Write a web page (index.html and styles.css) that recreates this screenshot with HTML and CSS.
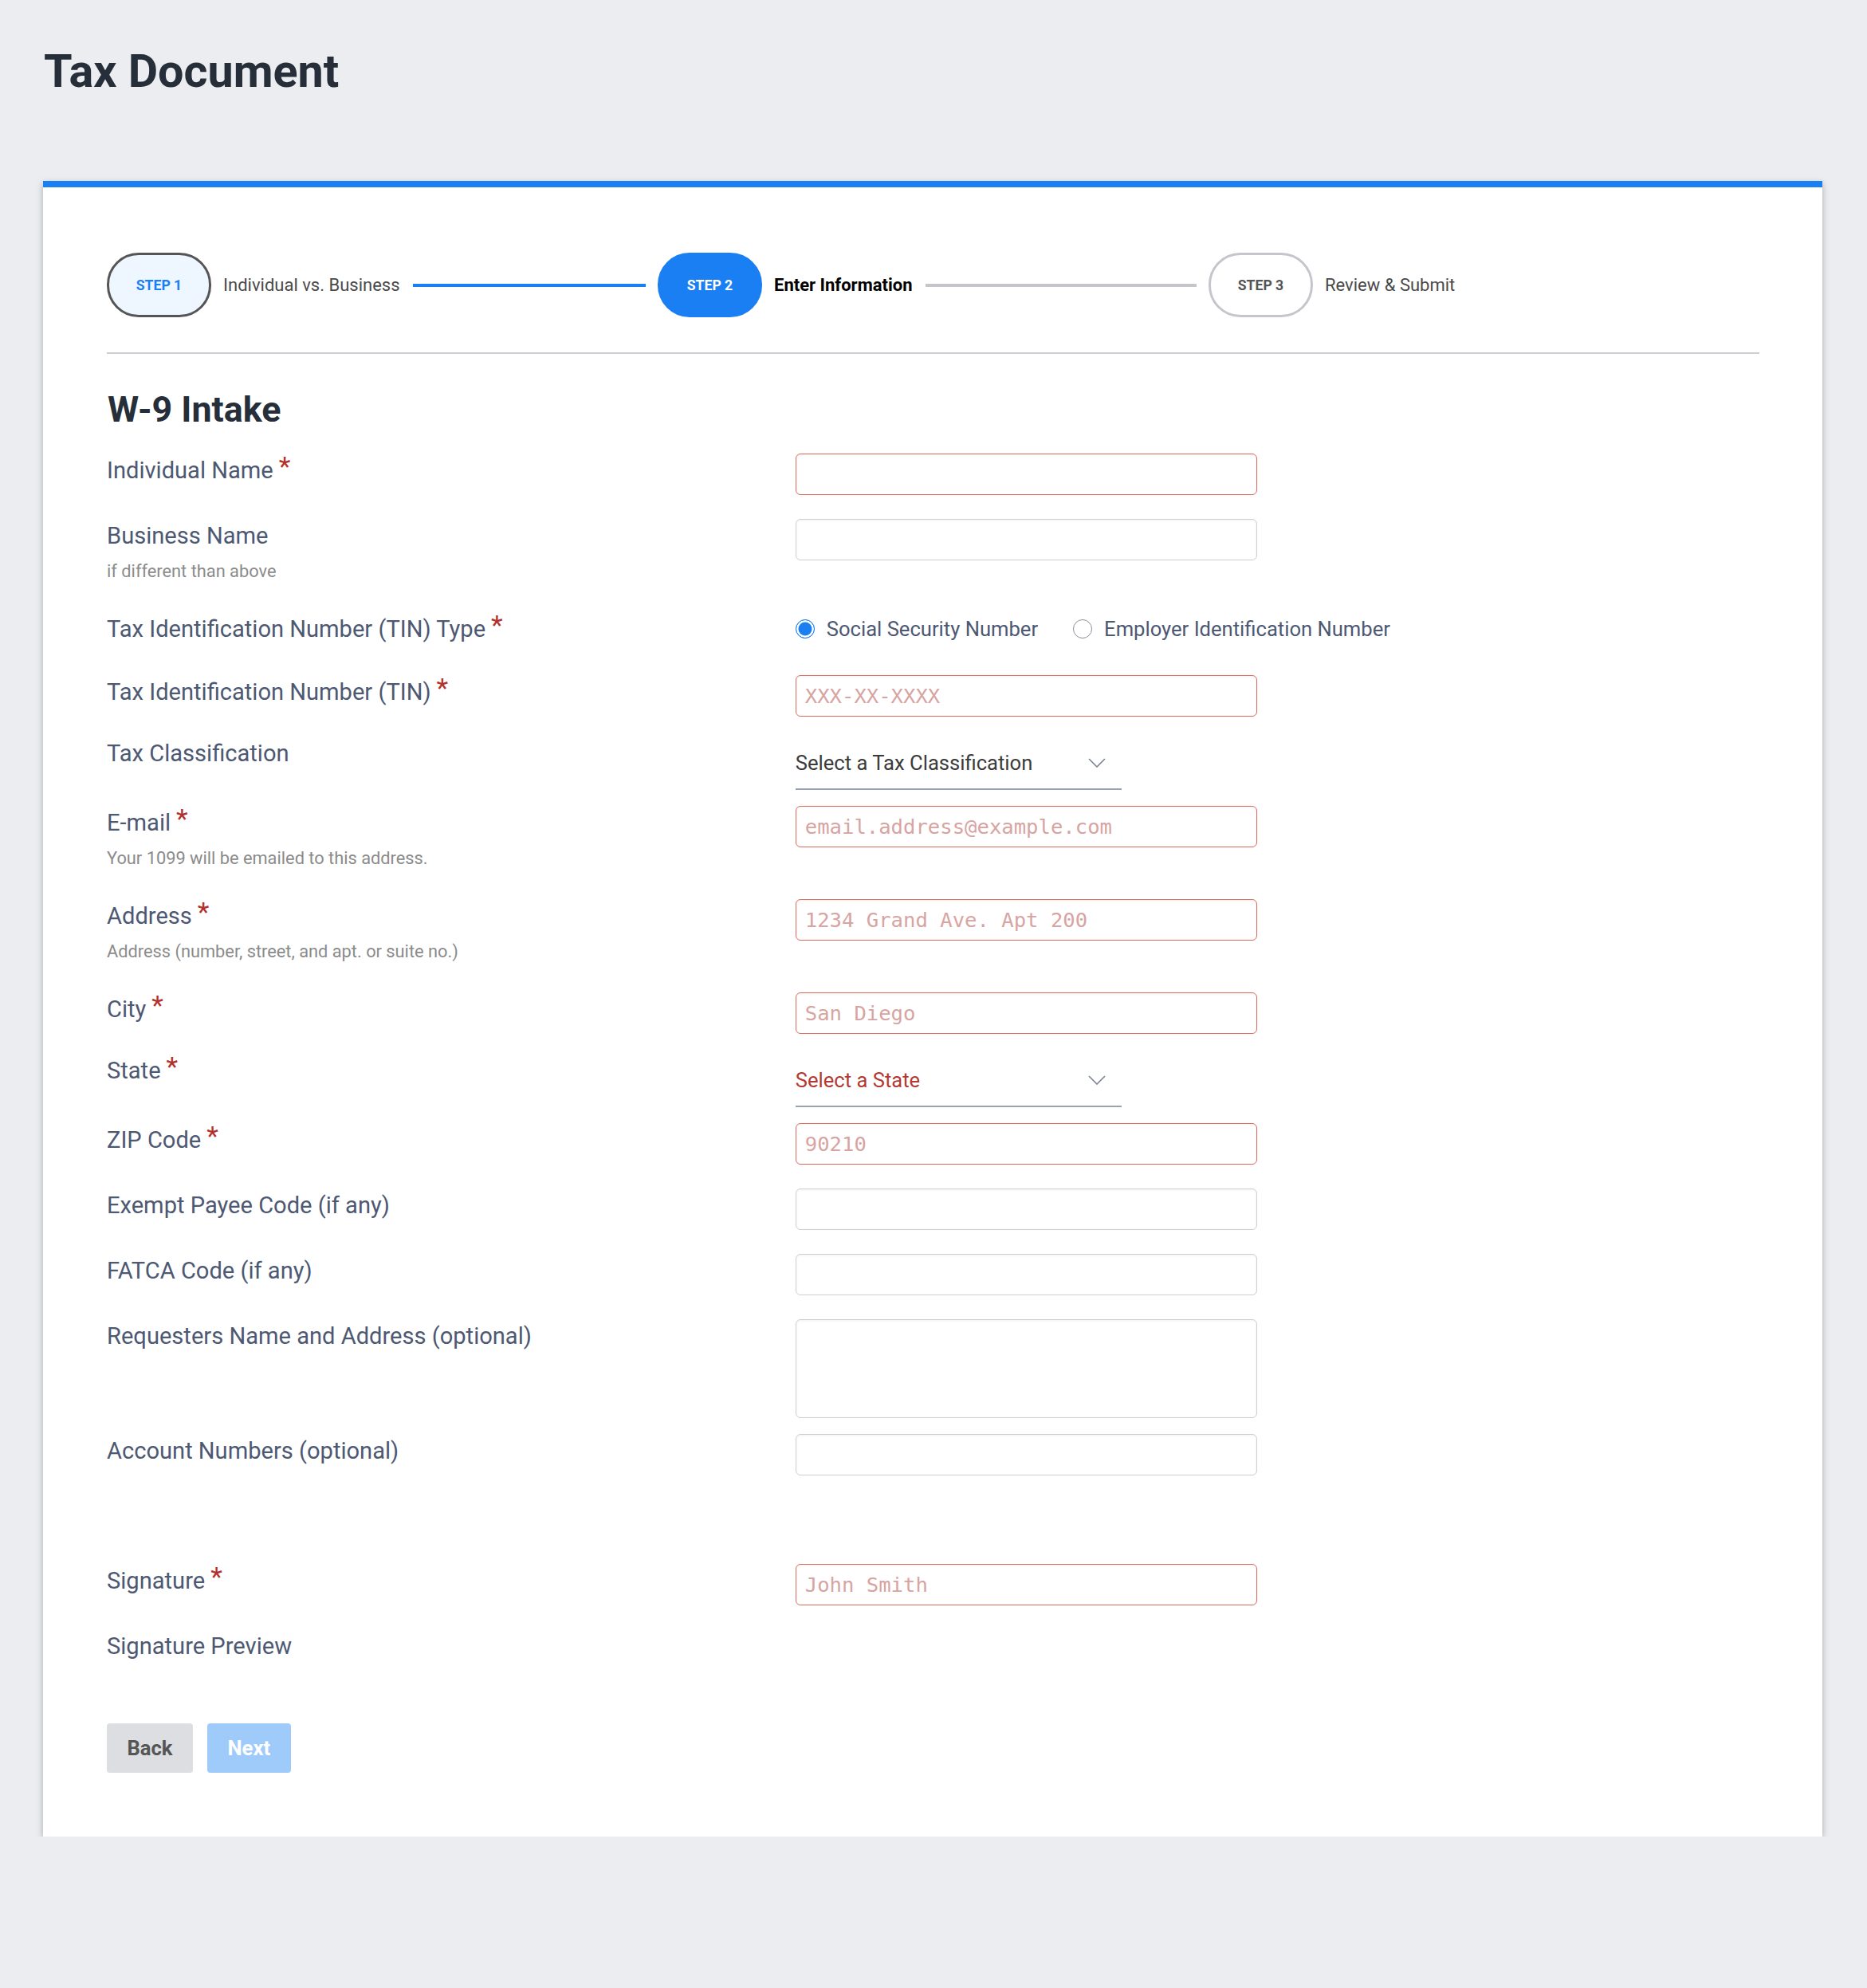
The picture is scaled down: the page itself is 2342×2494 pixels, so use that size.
FILE: index.html
```html
<!DOCTYPE html>
<html lang="en">
<head>
    <meta charset="UTF-8">
    <title>Tax Document</title>
    <link rel="stylesheet" href="styles.css">
</head>
<body>
    <h1 class="page-title">Tax Document</h1>

    <div class="card">
        <ol class="steps">
            <li class="step is-done">
                <span class="step-pill">STEP 1</span>
                <span class="step-label">Individual vs. Business</span>
                <span class="step-line"></span>
            </li>
            <li class="step is-current">
                <span class="step-pill">STEP 2</span>
                <span class="step-label">Enter Information</span>
                <span class="step-line"></span>
            </li>
            <li class="step">
                <span class="step-pill">STEP 3</span>
                <span class="step-label">Review &amp; Submit</span>
            </li>
        </ol>

        <h2 class="form-title">W-9 Intake</h2>

        <form class="w9-form">
            <div class="form-row">
                <label class="form-label" for="individualName">Individual Name<span class="req">*</span></label>
                <input class="text-input is-invalid" id="individualName" type="text">
            </div>

            <div class="form-row">
                <div>
                    <label class="form-label" for="businessName">Business Name</label>
                    <div class="help">if different than above</div>
                </div>
                <input class="text-input" id="businessName" type="text">
            </div>

            <div class="form-row">
                <span class="form-label">Tax Identification Number (TIN) Type<span class="req">*</span></span>
                <div class="radio-group">
                    <label class="radio"><input type="radio" name="tinType" checked>Social Security Number</label>
                    <label class="radio"><input type="radio" name="tinType">Employer Identification Number</label>
                </div>
            </div>

            <div class="form-row">
                <label class="form-label" for="tin">Tax Identification Number (TIN)<span class="req">*</span></label>
                <input class="text-input is-invalid" id="tin" type="text" placeholder="XXX-XX-XXXX">
            </div>

            <div class="form-row row-select">
                <label class="form-label" for="taxClass">Tax Classification</label>
                <div class="select-wrap">
                    <select class="select" id="taxClass">
                        <option>Select a Tax Classification</option>
                        <option>Individual/sole proprietor</option>
                        <option>C Corporation</option>
                        <option>S Corporation</option>
                        <option>Partnership</option>
                        <option>Trust/estate</option>
                        <option>Limited liability company</option>
                    </select>
                    <svg class="select-arrow" viewBox="0 0 22 12"><polyline points="1,1 11,11 21,1"/></svg>
                </div>
            </div>

            <div class="form-row">
                <div>
                    <label class="form-label" for="email">E-mail<span class="req">*</span></label>
                    <div class="help">Your 1099 will be emailed to this address.</div>
                </div>
                <input class="text-input is-invalid" id="email" type="text" placeholder="email.address@example.com">
            </div>

            <div class="form-row">
                <div>
                    <label class="form-label" for="address">Address<span class="req">*</span></label>
                    <div class="help">Address (number, street, and apt. or suite no.)</div>
                </div>
                <input class="text-input is-invalid" id="address" type="text" placeholder="1234 Grand Ave. Apt 200">
            </div>

            <div class="form-row">
                <label class="form-label" for="city">City<span class="req">*</span></label>
                <input class="text-input is-invalid" id="city" type="text" placeholder="San Diego">
            </div>

            <div class="form-row row-select">
                <label class="form-label" for="state">State<span class="req">*</span></label>
                <div class="select-wrap">
                    <select class="select is-invalid" id="state">
                        <option>Select a State</option>
                        <option>California</option>
                        <option>New York</option>
                        <option>Texas</option>
                    </select>
                    <svg class="select-arrow" viewBox="0 0 22 12"><polyline points="1,1 11,11 21,1"/></svg>
                </div>
            </div>

            <div class="form-row">
                <label class="form-label" for="zip">ZIP Code<span class="req">*</span></label>
                <input class="text-input is-invalid" id="zip" type="text" placeholder="90210">
            </div>

            <div class="form-row">
                <label class="form-label" for="exempt">Exempt Payee Code (if any)</label>
                <input class="text-input" id="exempt" type="text">
            </div>

            <div class="form-row">
                <label class="form-label" for="fatca">FATCA Code (if any)</label>
                <input class="text-input" id="fatca" type="text">
            </div>

            <div class="form-row row-tight">
                <label class="form-label" for="requester">Requesters Name and Address (optional)</label>
                <textarea class="text-input" id="requester"></textarea>
            </div>

            <div class="form-row">
                <label class="form-label" for="accounts">Account Numbers (optional)</label>
                <input class="text-input" id="accounts" type="text">
            </div>

            <div class="form-row row-signature">
                <label class="form-label" for="signature">Signature<span class="req">*</span></label>
                <input class="text-input is-invalid" id="signature" type="text" placeholder="John Smith">
            </div>

            <div class="form-row">
                <span class="form-label">Signature Preview</span>
            </div>

            <div class="actions">
                <button type="button" class="btn btn-back">Back</button>
                <button type="submit" class="btn btn-next" disabled>Next</button>
            </div>
        </form>
    </div>
</body>
</html>
```

FILE: styles.css
```css
body {
    margin: 0;
    padding: 57px 56px 0 54px;
    background: #ecedf0;
    font-family: Roboto, 'Liberation Sans', sans-serif;
    color: #4d5872;
}

.page-title {
    font-size: 57.5px;
    line-height: 65px;
    font-weight: 700;
    color: #262e39;
    margin: 0 0 105px 1px;
}

.card {
    background: #fff;
    border-top: 8px solid #1a7ff3;
    padding: 82px 79px 80px 80px;
    box-shadow: 0 3px 8px rgba(0, 0, 0, 0.28);
}

/* Progress steps */
.steps {
    display: flex;
    list-style: none;
    margin: 0;
    padding: 0 0 44px;
    border-bottom: 2px solid #cbcdd2;
}

.step {
    flex: 1;
    display: flex;
    align-items: center;
}

.step-pill {
    flex-shrink: 0;
    width: 131px;
    height: 81px;
    box-sizing: border-box;
    border: 3px solid #c4c6cc;
    border-radius: 40px;
    display: flex;
    align-items: center;
    justify-content: center;
    font-size: 17.6px;
    font-weight: 700;
    color: #555;
    background: #fff;
}

.step-label {
    margin-left: 15px;
    font-size: 22px;
    color: #4a4a4a;
    white-space: nowrap;
}

.step-line {
    flex: 1;
    height: 4px;
    margin: 0 15px 0 16px;
    background: #c4c6cc;
}

.step.is-done .step-pill {
    background: #eef6ff;
    border-color: #555;
    color: #1a7ff3;
}

.step.is-done .step-line {
    background: #1a7ff3;
}

.step.is-current .step-pill {
    background: #1a7ff3;
    border-color: #1a7ff3;
    color: #fff;
}

.step.is-current .step-label {
    font-weight: 700;
    color: #000;
}

/* Form */
.form-title {
    font-size: 44.8px;
    line-height: 54px;
    font-weight: 700;
    color: #262e39;
    margin: 43px 0 28px 1px;
}

.form-row {
    display: grid;
    grid-template-columns: 5fr 7fr;
    align-items: start;
    margin-bottom: 30px;
}

.form-label {
    display: block;
    font-size: 29.1px;
    line-height: 42px;
}

.req {
    position: relative;
    top: -3px;
    margin-left: 7px;
    font-size: 34px;
    line-height: 0;
    color: #b3312c;
}

.help {
    margin: 7px 0 4px;
    font-size: 21.8px;
    line-height: 34px;
    color: #8b8b8b;
}

.text-input {
    display: block;
    width: 579px;
    height: 52px;
    box-sizing: border-box;
    margin: 0;
    padding: 0 11px;
    border: 1.5px solid #cfcfcf;
    border-radius: 6px;
    background: #fff;
    box-shadow: inset 0 1px 3px rgba(0, 0, 0, 0.06);
    font: 25.6px 'DejaVu Sans Mono', monospace;
    color: #333;
}

.text-input.is-invalid {
    border-color: #e06a5e;
}

.text-input::placeholder {
    color: #d7a4a2;
}

textarea.text-input {
    height: 124px;
    padding: 10px 11px;
    resize: none;
}

/* negative top margin merges with the row above, pulling selects up a little */
.row-select {
    margin-top: -5px;
    margin-bottom: 20px;
}

.row-tight {
    margin-bottom: 20px;
}

.row-signature {
    margin-top: 111px;
}

.select-wrap {
    position: relative;
    width: 409px;
}

.select {
    appearance: none;
    -webkit-appearance: none;
    display: block;
    width: 100%;
    height: 67px;
    margin: 0;
    padding: 0 40px 0 0;
    border: 0;
    border-bottom: 2px solid #9aa1b1;
    border-radius: 0;
    background: transparent;
    font: 25.6px Roboto, 'Liberation Sans', sans-serif;
    color: #3b3b3b;
}

.select.is-invalid {
    color: #b23a33;
}

.select-arrow {
    position: absolute;
    right: 20px;
    top: 27px;
    width: 22px;
    height: 12px;
    pointer-events: none;
}

.select-arrow polyline {
    fill: none;
    stroke: #7a8296;
    stroke-width: 1.6;
}

.radio-group {
    display: flex;
    gap: 44px;
    height: 49px;
}

.radio {
    display: flex;
    align-items: center;
    gap: 15px;
    height: 42px;
    font-size: 25.6px;
}

.radio input {
    appearance: none;
    -webkit-appearance: none;
    width: 24px;
    height: 24px;
    box-sizing: border-box;
    margin: 0;
    border: 1.5px solid #8b8f99;
    border-radius: 50%;
    background: #fff;
}

.radio input:checked {
    border-color: #1a7ff3;
    background: #1a7ff3;
    box-shadow: inset 0 0 0 2.5px #fff;
}

/* Buttons */
.actions {
    display: flex;
    gap: 18px;
    margin-top: 76px;
}

.btn {
    height: 62px;
    padding: 0 25.5px;
    border: none;
    border-radius: 4px;
    font: 700 25.6px Roboto, 'Liberation Sans', sans-serif;
    cursor: pointer;
}

.btn-back {
    background: #dcdee2;
    color: #555;
}

.btn-next {
    background: #9fcbfa;
    color: #fff;
    cursor: default;
}
```
